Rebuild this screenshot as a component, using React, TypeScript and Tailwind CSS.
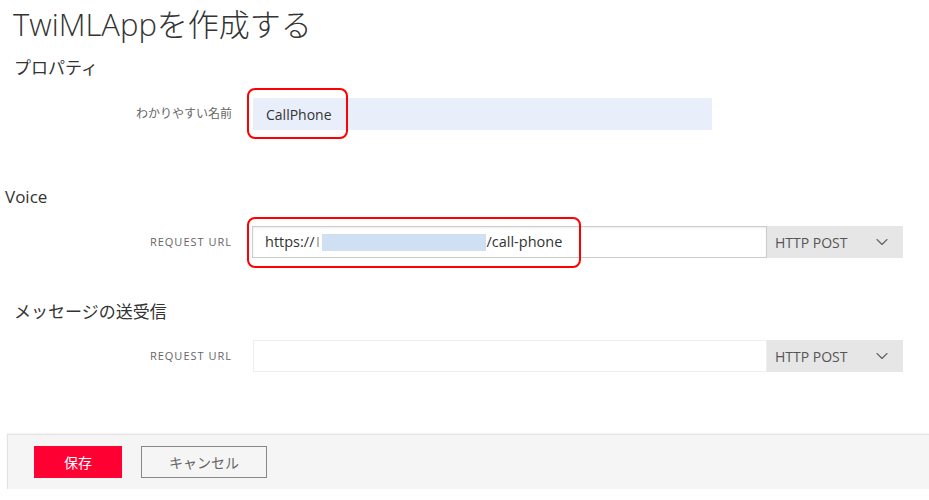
import { ChevronDown } from 'lucide-react';

const font = { fontFamily: '"Open Sans", "Noto Sans CJK JP", sans-serif' };

const HttpSelect = () => (
  <div className="flex h-[32px] w-[136px] items-center justify-between bg-[#e6e6e6] pl-[8px] pr-[11px] text-[14px] text-[#555]">
    <span>HTTP POST</span>
    <ChevronDown className="h-[20px] w-[20px] text-[#666]" strokeWidth={1.4} />
  </div>
);

export default function App() {
  return (
    <div className="h-[500px] w-[929px] overflow-hidden bg-white text-[#333]" style={font}>
      <h1 className="pl-[13px] pt-[4px] text-[31px] font-light leading-[40px] text-[#333]">TwiMLAppを作成する</h1>

      <h2 className="mt-[12px] pl-[14px] text-[17px] leading-[24px] text-[#333]">プロパティ</h2>

      <div className="mt-[18px] flex items-center">
        <label className="w-[232px] text-right text-[12px] text-[#666]">わかりやすい名前</label>
        <div className="relative ml-[21px] flex h-[32px] w-[459px] items-center bg-[#e8eefa] px-[13px] text-[14px] text-[#333]">
          CallPhone
          <div className="absolute left-[-6px] top-[-10px] h-[51px] w-[101px] rounded-[8px] border-2 border-[#f00]" />
        </div>
      </div>

      <h2 className="mt-[55px] pl-[5px] text-[17px] leading-[24px] text-[#333]">Voice</h2>

      <div className="mt-[17px] flex items-center">
        <label className="w-[232px] text-right text-[11px] tracking-[1px] text-[#666]">REQUEST URL</label>
        <div className="relative ml-[20px] flex h-[32px] w-[515px] items-center border border-[#ccc] bg-white px-[12px] text-[14.5px] text-[#333] shadow-[inset_0_1px_2px_rgba(0,0,0,0.08)]">
          <span>https://</span>
          <span className="ml-[3px] h-[10px] w-[2px] bg-[#bbb]" />
          <span className="ml-[3px] h-[17px] w-[164px] bg-[#cfe0f3]" />
          <span>/call-phone</span>
          <div className="absolute left-[-6px] top-[-10px] h-[51px] w-[334px] rounded-[8px] border-2 border-[#f00]" />
        </div>
        <HttpSelect />
      </div>

      <h2 className="mt-[42px] pl-[14px] text-[17px] leading-[24px] text-[#333]">メッセージの送受信</h2>

      <div className="mt-[16px] flex items-center">
        <label className="w-[232px] text-right text-[11px] tracking-[1px] text-[#666]">REQUEST URL</label>
        <div className="ml-[21px] h-[32px] w-[514px] border border-[#eee] bg-white" />
        <HttpSelect />
      </div>

      <div className="ml-[7px] mt-[62px] flex h-[55px] items-center gap-[19px] border-l border-t border-[#e3e3e3] bg-[#f5f5f5] pl-[26px] shadow-[0_-1px_2px_rgba(0,0,0,0.05)]">
        <button className="h-[32px] w-[88px] bg-[#ff0033] text-[14px] text-white">保存</button>
        <button className="h-[32px] w-[126px] border border-[#888] bg-[#f5f5f5] text-[14px] text-[#666]">キャンセル</button>
      </div>
    </div>
  );
}
